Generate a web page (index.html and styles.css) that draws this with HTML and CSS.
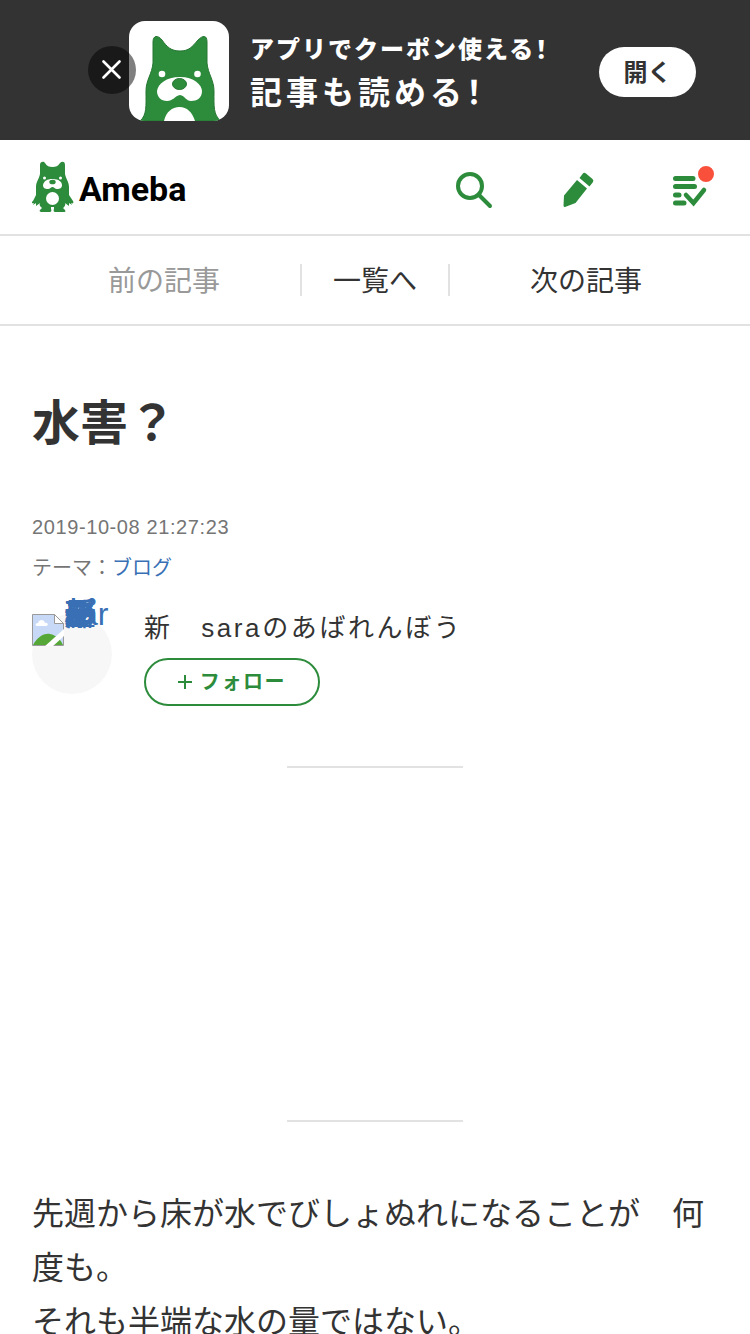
FILE: index.html
```html
<!DOCTYPE html>
<html lang="ja">
<head>
<meta charset="utf-8">
<meta name="viewport" content="width=device-width">
<title>水害？</title>
<link rel="stylesheet" href="styles.css">
</head>
<body>
<aside class="banner">
  <button class="banner-close" type="button" aria-label="閉じる">
    <svg width="20" height="20" viewBox="0 0 20 20"><path d="M1.500 1.500L17.500 17.500M17.500 1.500L1.500 17.500" fill="none" stroke="#fff" stroke-width="2.6" stroke-linecap="round"/></svg>
  </button>
  <svg class="banner-icon" viewBox="0 0 100 100" aria-hidden="true">
    <rect width="100" height="100" fill="#fff"/>
    <path d="M11 100C18 94 17 85 17 70C17 59 23 53 24 42V21C24 14 29 14 33 19C38 26 42 30 51 30C60 30 63 26 69 19C74 14 78 14 78 21V42C79 53 85 59 85 70C85 85 84 94 92 100Z" fill="#2d8c3c" stroke="#267633"/>
    <circle cx="33" cy="53" r="3.3" fill="#fff"/><circle cx="68.500" cy="53" r="3.300" fill="#fff"/>
    <path d="M51 56C65 56 73 64 73 70C73 77 68 80 62 80C57 80 56 75 51 74C46 75 44 80 38 80C32 80 28 76 28 70C29 63 37 56 51 56Z" fill="#fff"/>
    <ellipse cx="50.500" cy="63" rx="7" ry="5.500" fill="#2d8c3c" stroke="#267633"/>
    <path d="M35 100C37 91 43 86 50.500 86C58 86 63 91 66 100Z" fill="#fff"/>
  </svg>
  <p class="banner-copy">
    <span class="banner-lead">アプリでクーポン使える<span class="half">！</span></span>
    <span class="banner-main">記事も読める<span class="half">！</span></span>
  </p>
  <button class="banner-open" type="button">開く</button>
</aside>

<header class="header">
  <a class="logo" href="#">
    <svg width="42" height="52" viewBox="0 0 42 52" aria-hidden="true">
      <path d="M8 4C8 0 12 0 13 2C15 5 17 6 20.500 6C24 6 26 5 28 2C30 0 33 0 33 4V13C34 18 37 21 37 26V34L41 40C42 42 41 43 39 42L40 44L37 42L37 45L33 42C34 44 32 46 31 47L33 49C34 51 33 51 32 51H24C22 51 21 50 22 48V46H19V48C20 50 19 51 17 51H9C8 51 7 50 8 49L10 47C8 45 7 44 8 42L4 45V42L1 44L2 42C0 43-1 41 1 40L4 34V26C4 21 7 18 8 13Z" fill="#2d8c3c"/>
      <circle cx="12.500" cy="17" r="1.500" fill="#fff"/><circle cx="28.500" cy="17" r="1.500" fill="#fff"/>
      <path d="M20.500 18C27 18 30 21 30 24C30 27 28 28 25 28C23 28 22 26 20.500 26C19 26 18 28 16 28C13 28 11 27 11 24C12 20 15 18 20.500 18Z" fill="#fff"/>
      <ellipse cx="20.500" cy="21" rx="3.200" ry="2.300" fill="#2d8c3c"/>
      <circle cx="20.500" cy="37.500" r="6.500" fill="#fff"/>
    </svg>
    <span class="logo-word">Ameba</span>
  </a>
  <div class="tools">
    <button class="tool" type="button" aria-label="検索">
      <svg width="40" height="40" viewBox="0 0 40 40"><circle cx="16" cy="16" r="12" fill="none" stroke="#2d8c3c" stroke-width="4"/><path d="M24.500 24.500L36 36" stroke="#2d8c3c" stroke-width="4" stroke-linecap="round"/></svg>
    </button>
    <button class="tool" type="button" aria-label="投稿">
      <svg width="40" height="40" viewBox="0 0 40 40"><path d="M15 10L25 18.500L13.500 33L3 37Q1.500 37 1.500 35.500L2 25.500ZM17.500 8L20.500 4Q22 2 24 3.500L30.500 9Q32 10.500 31 12L27.500 16.500Z" fill="#2d8c3c"/></svg>
    </button>
    <button class="tool" type="button" aria-label="チェックリスト">
      <svg width="40" height="40" viewBox="0 0 40 40"><g fill="none" stroke="#2d8c3c" stroke-width="5" stroke-linecap="round"><path d="M5.500 8.500H23M5.500 16.500H24.500M5.500 25H9M5.500 33H14"/><path d="M16 25L23.500 33L34 20" stroke-width="4.500"/></g></svg>
      <span class="badge"></span>
    </button>
  </div>
</header>

<nav class="pager">
  <span class="pager-item pager-off">前の記事</span>
  <a class="pager-item pager-list" href="#">一覧へ</a>
  <a class="pager-item" href="#">次の記事</a>
</nav>

<main class="article">
  <h1 class="title">水害？</h1>
  <time class="date" datetime="2019-10-08T21:27:23">2019-10-08 21:27:23</time>
  <p class="theme">テーマ：<a href="#">ブログ</a></p>
  <section class="author">
    <a class="avatar" href="#">
      <svg class="broken" width="32" height="32" viewBox="0 0 32 32" aria-hidden="true">
        <path d="M.5.5H22.500L31.500 9.500V31.500H.5Z" fill="#c7d9f7" stroke="#9a9a9a"/>
        <path d="M5 12C3 12 3 9 6 9C7 5 12 5 13 9C16 8 17 12 14 12Z" fill="#fff"/>
        <path d="M1 31C5 24 11 19 18 20C24 21 29 26 31 31Z" fill="#55a838"/>
        <path d="M12 33L32 15V22L20 33Z" fill="#fff"/>
        <path d="M22.500.5V9.500H31.500Z" fill="#fff" stroke="#9a9a9a"/>
      </svg>
      <span class="alt">sara新部屋のプロフィール</span>
    </a>
    <div class="author-info">
      <p class="name">新　saraのあばれんぼう</p>
      <button class="follow" type="button">
        <svg width="14" height="14" viewBox="0 0 14 14" aria-hidden="true"><path d="M7 0V14M0 7H14" stroke="#2d8c3c" stroke-width="2"/></svg>
        <span>フォロー</span>
      </button>
    </div>
  </section>
  <hr class="rule">
  <div class="ad"></div>
  <hr class="rule">
  <p class="text">先週から床が水でびしょぬれになることが　何度も。<br>それも半端な水の量ではない。</p>
</main>
</body>
</html>
```

FILE: styles.css
```css
* { box-sizing: border-box; }
body {
  margin: 0;
  height: 100vh;
  overflow: hidden;
  background: #fff;
  color: #333;
  font-family: "Liberation Sans", "Noto Sans CJK JP", sans-serif;
}
p, h1 { margin: 0; }
a { color: #3970b5; text-decoration: none; }
button { padding: 0; border: 0; background: none; font: inherit; }
svg { display: block; flex: none; }

.banner {
  display: flex;
  align-items: center;
  height: 140px;
  padding: 0 54px 0 88px;
  background: #333;
  color: #fff;
  font-family: "Noto Sans CJK JP", sans-serif;
}
.banner-close {
  display: grid;
  place-items: center;
  width: 48px;
  height: 48px;
  margin-right: -7px;
  border-radius: 50%;
  background: rgba(0, 0, 0, .5);
  z-index: 1;
}
.banner-icon { width: 100px; height: 100px; margin-top: 2px; border-radius: 16px; }
.banner-copy { margin-left: 21px; padding-top: 4px; white-space: nowrap; }
.banner-lead, .banner-main { display: block; }
.banner-lead { font-size: 24px; line-height: 36px; font-weight: 900; letter-spacing: 2px; }
.banner-main { font-size: 32px; line-height: 48px; font-weight: 700; letter-spacing: 4px; }
.half { font-feature-settings: "halt"; }
.banner-open {
  width: 97px;
  height: 50px;
  margin: 4px 0 0 auto;
  padding-bottom: 4px;
  border-radius: 25px;
  background: #fff;
  color: #333;
  font-size: 24px;
  font-weight: 700;
}

.header {
  display: flex;
  align-items: center;
  justify-content: space-between;
  height: 96px;
  padding: 0 40px 0 32px;
  border-bottom: 2px solid #e2e2e2;
}
.logo { display: flex; align-items: center; gap: 5px; color: #000; }
.logo-word { padding-top: 4px; font: 700 34px/44px Roboto, sans-serif; }
.tools { display: flex; gap: 68px; padding-top: 6px; }
.tool { position: relative; width: 40px; height: 40px; }
.badge {
  position: absolute;
  top: -6px;
  right: -6px;
  width: 20px;
  height: 20px;
  border: 2px solid #fff;
  border-radius: 50%;
  background: #f9503c;
}

.pager {
  display: flex;
  align-items: center;
  height: 90px;
  padding: 0 28px;
  border-bottom: 2px solid #e2e2e2;
  font-size: 28px;
  line-height: 28px;
  text-align: center;
}
.pager-item { flex: 1; padding-top: 4px; color: #333; }
.pager-off { color: #999; }
.pager-list { flex: 0 0 150px; border: solid #e2e2e2; border-width: 0 2px; }

.article { padding: 62px 32px 0; }
.title { font-size: 48px; line-height: 72px; }
.date {
  display: block;
  margin-top: 52px;
  color: #757575;
  font-size: 20px;
  line-height: 30px;
  letter-spacing: .03em;
}
.theme { margin-top: 11px; color: #757575; font-size: 20px; line-height: 30px; }
.author { display: flex; gap: 32px; margin-top: 23px; }
.avatar {
  display: flex;
  width: 80px;
  height: 80px;
  margin-top: 8px;
  border-radius: 50%;
  background: #f7f7f7;
}
.alt { width: 48px; font-size: 32px; line-height: 0; word-break: break-all; }
.name { padding-top: 2px; font-size: 26px; line-height: 40px; letter-spacing: .1em; }
.follow {
  display: flex;
  align-items: center;
  justify-content: center;
  gap: 8px;
  width: 176px;
  height: 48px;
  margin-top: 10px;
  border: 2px solid #2d8c3c;
  border-radius: 24px;
  color: #2d8c3c;
  font-size: 20px;
  font-weight: 700;
  letter-spacing: .08em;
}
.follow span { padding-bottom: 3px; }
.rule { width: 176px; height: 2px; margin: 0 auto; border: 0; background: #e2e2e2; }
.author + .rule { margin-top: 60px; }
.ad { height: 352px; }
.text { margin-top: 65px; font-size: 32px; line-height: 54px; }
```
